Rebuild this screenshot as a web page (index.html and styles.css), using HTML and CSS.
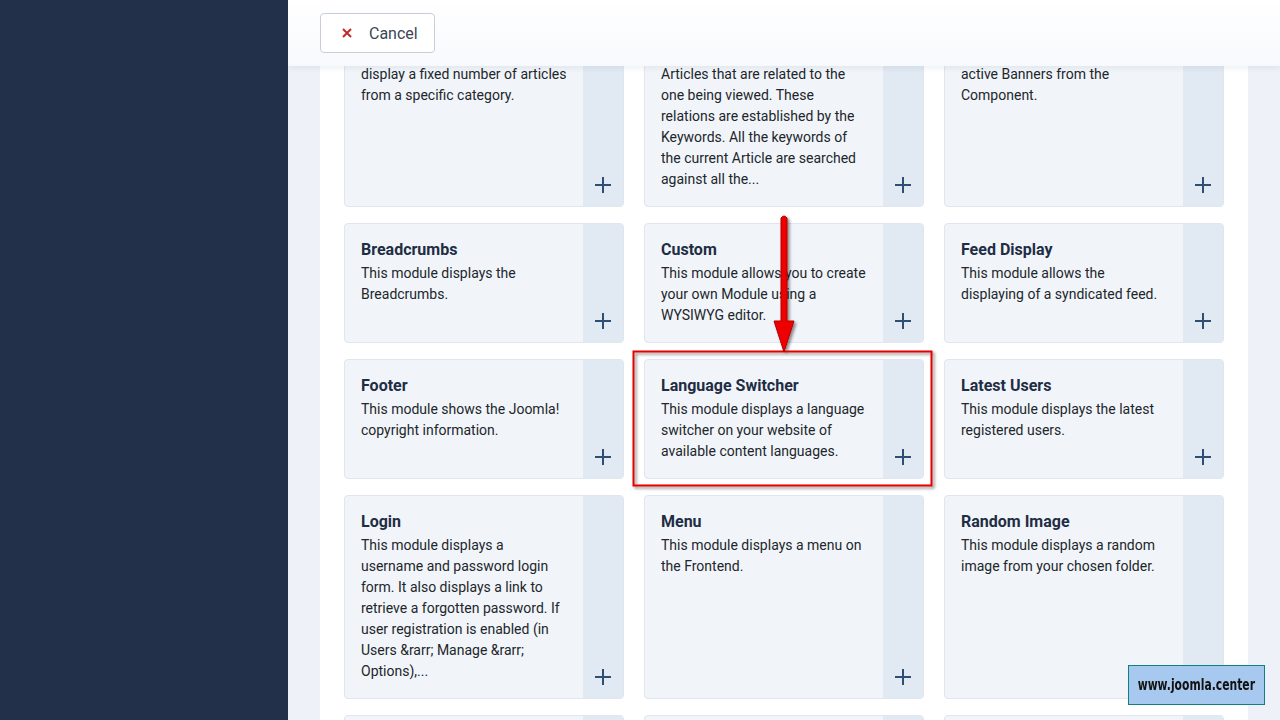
FILE: index.html
```html
<!DOCTYPE html>
<html lang="en">
<head>
    <meta charset="UTF-8">
    <title>Modules: Select a Module Type</title>
    <link rel="stylesheet" href="styles.css">
</head>
<body>
    <div class="layout">
        <aside class="sidebar"></aside>

        <main class="main">
            <div class="toolbar">
                <button type="button" class="btn-cancel">
                    <svg class="icon-cancel" width="10" height="10" viewBox="0 0 10 10">
                        <path d="M1 1 L9 9 M9 1 L1 9" stroke="#c52827" stroke-width="2" fill="none"/>
                    </svg>
                    <span>Cancel</span>
                </button>
            </div>

            <div class="panel">
                <div class="module-grid">
                    <div class="module-card">
                        <div class="module-body">
                            <h3>Articles - Newsflash</h3>
                            <p>The Newsflash Module will display a fixed number of articles from a specific category.</p>
                        </div>
                        <div class="module-add"><span class="plus"></span></div>
                    </div>
                    <div class="module-card">
                        <div class="module-body">
                            <h3>Articles - Related</h3>
                            <p>This module displays other Articles that are related to the one being viewed. These relations are established by the Keywords. All the keywords of the current Article are searched against all the...</p>
                        </div>
                        <div class="module-add"><span class="plus"></span></div>
                    </div>
                    <div class="module-card">
                        <div class="module-body">
                            <h3>Banners</h3>
                            <p>The Banner Module displays the active Banners from the Component.</p>
                        </div>
                        <div class="module-add"><span class="plus"></span></div>
                    </div>

                    <div class="module-card">
                        <div class="module-body">
                            <h3>Breadcrumbs</h3>
                            <p>This module displays the Breadcrumbs.</p>
                        </div>
                        <div class="module-add"><span class="plus"></span></div>
                    </div>
                    <div class="module-card">
                        <div class="module-body">
                            <h3>Custom</h3>
                            <p>This module allows you to create your own Module using a WYSIWYG editor.</p>
                        </div>
                        <div class="module-add"><span class="plus"></span></div>
                    </div>
                    <div class="module-card">
                        <div class="module-body">
                            <h3>Feed Display</h3>
                            <p>This module allows the displaying of a syndicated feed.</p>
                        </div>
                        <div class="module-add"><span class="plus"></span></div>
                    </div>

                    <div class="module-card">
                        <div class="module-body">
                            <h3>Footer</h3>
                            <p>This module shows the Joomla! copyright information.</p>
                        </div>
                        <div class="module-add"><span class="plus"></span></div>
                    </div>
                    <div class="module-card">
                        <div class="module-body">
                            <h3>Language Switcher</h3>
                            <p>This module displays a language switcher on your website of available content languages.</p>
                        </div>
                        <div class="module-add"><span class="plus"></span></div>
                    </div>
                    <div class="module-card">
                        <div class="module-body">
                            <h3>Latest Users</h3>
                            <p>This module displays the latest registered users.</p>
                        </div>
                        <div class="module-add"><span class="plus"></span></div>
                    </div>

                    <div class="module-card">
                        <div class="module-body">
                            <h3>Login</h3>
                            <p>This module displays a username and password login form. It also displays a link to retrieve a forgotten password. If user registration is enabled (in Users &amp;rarr; Manage &amp;rarr; Options),...</p>
                        </div>
                        <div class="module-add"><span class="plus"></span></div>
                    </div>
                    <div class="module-card">
                        <div class="module-body">
                            <h3>Menu</h3>
                            <p>This module displays a menu on the Frontend.</p>
                        </div>
                        <div class="module-add"><span class="plus"></span></div>
                    </div>
                    <div class="module-card">
                        <div class="module-body">
                            <h3>Random Image</h3>
                            <p>This module displays a random image from your chosen folder.</p>
                        </div>
                        <div class="module-add"><span class="plus"></span></div>
                    </div>

                    <div class="module-card">
                        <div class="module-body">
                            <h3>Smart Search</h3>
                            <p>This is a search module.</p>
                        </div>
                        <div class="module-add"><span class="plus"></span></div>
                    </div>
                    <div class="module-card">
                        <div class="module-body">
                            <h3>Statistics</h3>
                            <p>The Statistics Module shows information about your server installation.</p>
                        </div>
                        <div class="module-add"><span class="plus"></span></div>
                    </div>
                    <div class="module-card">
                        <div class="module-body">
                            <h3>Syndication Feeds</h3>
                            <p>Smart Syndication Module that creates a Syndicated Feed for the page.</p>
                        </div>
                        <div class="module-add"><span class="plus"></span></div>
                    </div>
                </div>
            </div>
        </main>
    </div>

    <!-- tutorial markup drawn over the screenshot -->
    <svg class="annotation" width="1280" height="720" viewBox="0 0 1280 720">
        <defs>
            <filter id="shade" x="-20%" y="-20%" width="140%" height="140%">
                <feDropShadow dx="2" dy="2" stdDeviation="1.5" flood-color="#000" flood-opacity="0.45"/>
            </filter>
        </defs>
        <g filter="url(#shade)">
            <rect x="633.5" y="351.5" width="298" height="134" fill="none" stroke="#e30000" stroke-width="2"/>
            <path d="M781 218 Q784 214 787 218 L787 321 L794 321 L784 352 L774 321 L781 321 Z" fill="#ee0000" stroke="#b00000" stroke-width="1"/>
        </g>
    </svg>

    <div class="watermark"><span>www.joomla.center</span></div>
</body>
</html>
```

FILE: styles.css
```css
html, body {
    margin: 0;
    height: 100%;
    overflow: hidden;
}
body {
    font-family: Roboto, "Liberation Sans", sans-serif;
    color: #22262a;
}
.layout {
    display: flex;
    height: 720px;
}
.sidebar {
    width: 288px;
    flex-shrink: 0;
    background-color: #223049;
}
.main {
    position: relative;
    flex: 1;
    background-color: #eef2f8;
    padding: 0 32px;
    overflow: hidden;
}
.toolbar {
    position: absolute;
    top: 0;
    left: 0;
    right: 0;
    height: 66px;
    padding: 13px 32px 0;
    box-sizing: border-box;
    background: linear-gradient(#ffffff, #f7f9fc);
    box-shadow: 0 2px 6px rgba(30, 50, 80, 0.08);
    z-index: 2;
}
.btn-cancel {
    display: flex;
    align-items: center;
    gap: 17px;
    height: 40px;
    width: 115px;
    padding: 0 21px;
    background-color: #fff;
    border: 1px solid #c8ced8;
    border-radius: 4px;
    font-family: Roboto, "Liberation Sans", sans-serif;
    font-size: 16px;
    color: #3b4656;
}
.icon-cancel {
    flex-shrink: 0;
}
.panel {
    background-color: #fff;
    padding: 3px 24px 24px;
    min-height: 100%;
}
.module-grid {
    display: grid;
    grid-template-columns: repeat(3, 280px);
    column-gap: 20px;
    row-gap: 16px;
}
.module-card {
    display: flex;
    background-color: #f1f5fa;
    border: 1px solid #dfe6ef;
    border-radius: 4px;
    overflow: hidden;
}
.module-body {
    flex: 1;
    padding: 16px 16px 16px;
}
.module-body h3 {
    margin: 0 0 3px;
    font-size: 16px;
    line-height: 20px;
    font-weight: 700;
    color: #1f2d44;
}
.module-body p {
    margin: 0;
    font-size: 14px;
    line-height: 21px;
}
.module-add {
    width: 40px;
    flex-shrink: 0;
    background-color: #e1e9f3;
    display: flex;
    align-items: flex-end;
    justify-content: center;
    padding-bottom: 13px;
}
.plus {
    position: relative;
    width: 16px;
    height: 16px;
}
.plus::before, .plus::after {
    content: "";
    position: absolute;
    background-color: #2f4e73;
}
.plus::before {
    left: 0;
    right: 0;
    top: 7px;
    height: 2px;
}
.plus::after {
    top: 0;
    bottom: 0;
    left: 7px;
    width: 2px;
}
.annotation {
    position: fixed;
    top: 0;
    left: 0;
    pointer-events: none;
    z-index: 5;
}
.watermark {
    position: fixed;
    left: 1128px;
    top: 665px;
    width: 137px;
    height: 40px;
    box-sizing: border-box;
    display: flex;
    align-items: center;
    justify-content: center;
    background-color: #a8c9ef;
    border: 1px solid #108080;
    font-family: "DejaVu Sans Condensed", "DejaVu Sans", sans-serif;
    font-weight: bold;
    font-size: 15px;
    color: #111;
    z-index: 6;
}
.watermark span {
    display: inline-block;
    white-space: nowrap;
    transform: scaleX(0.8);
}
```
